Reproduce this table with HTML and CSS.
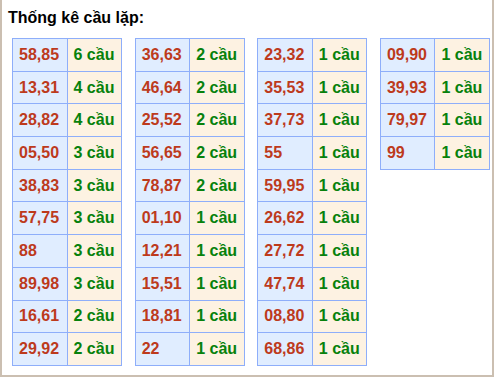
FILE: index.html
```html
<!DOCTYPE html>
<html lang="vi">
<head>
<meta charset="utf-8">
<link rel="stylesheet" href="styles.css">
</head>
<body>
<div class="box">
  <h3 class="title">Thống kê cầu lặp:</h3>
  <div class="grid">
    <table class="tk">
      <tr><td class="num">58,85</td><td class="cnt">6 cầu</td></tr>
      <tr><td class="num">13,31</td><td class="cnt">4 cầu</td></tr>
      <tr><td class="num">28,82</td><td class="cnt">4 cầu</td></tr>
      <tr><td class="num">05,50</td><td class="cnt">3 cầu</td></tr>
      <tr><td class="num">38,83</td><td class="cnt">3 cầu</td></tr>
      <tr><td class="num">57,75</td><td class="cnt">3 cầu</td></tr>
      <tr><td class="num">88</td><td class="cnt">3 cầu</td></tr>
      <tr><td class="num">89,98</td><td class="cnt">3 cầu</td></tr>
      <tr><td class="num">16,61</td><td class="cnt">2 cầu</td></tr>
      <tr><td class="num">29,92</td><td class="cnt">2 cầu</td></tr>
    </table>
    <table class="tk">
      <tr><td class="num">36,63</td><td class="cnt">2 cầu</td></tr>
      <tr><td class="num">46,64</td><td class="cnt">2 cầu</td></tr>
      <tr><td class="num">25,52</td><td class="cnt">2 cầu</td></tr>
      <tr><td class="num">56,65</td><td class="cnt">2 cầu</td></tr>
      <tr><td class="num">78,87</td><td class="cnt">2 cầu</td></tr>
      <tr><td class="num">01,10</td><td class="cnt">1 cầu</td></tr>
      <tr><td class="num">12,21</td><td class="cnt">1 cầu</td></tr>
      <tr><td class="num">15,51</td><td class="cnt">1 cầu</td></tr>
      <tr><td class="num">18,81</td><td class="cnt">1 cầu</td></tr>
      <tr><td class="num">22</td><td class="cnt">1 cầu</td></tr>
    </table>
    <table class="tk">
      <tr><td class="num">23,32</td><td class="cnt">1 cầu</td></tr>
      <tr><td class="num">35,53</td><td class="cnt">1 cầu</td></tr>
      <tr><td class="num">37,73</td><td class="cnt">1 cầu</td></tr>
      <tr><td class="num">55</td><td class="cnt">1 cầu</td></tr>
      <tr><td class="num">59,95</td><td class="cnt">1 cầu</td></tr>
      <tr><td class="num">26,62</td><td class="cnt">1 cầu</td></tr>
      <tr><td class="num">27,72</td><td class="cnt">1 cầu</td></tr>
      <tr><td class="num">47,74</td><td class="cnt">1 cầu</td></tr>
      <tr><td class="num">08,80</td><td class="cnt">1 cầu</td></tr>
      <tr><td class="num">68,86</td><td class="cnt">1 cầu</td></tr>
    </table>
    <table class="tk">
      <tr><td class="num">09,90</td><td class="cnt">1 cầu</td></tr>
      <tr><td class="num">39,93</td><td class="cnt">1 cầu</td></tr>
      <tr><td class="num">79,97</td><td class="cnt">1 cầu</td></tr>
      <tr><td class="num">99</td><td class="cnt">1 cầu</td></tr>
    </table>
  </div>
</div>
</body>
</html>
```

FILE: styles.css
```css
html, body {
  margin: 0;
  padding: 0;
  background: #fff;
}
body {
  font-family: "Liberation Sans", Arial, sans-serif;
}
.box {
  box-sizing: border-box;
  width: 494px;
  height: 377px;
  border: 2px solid #cbbfb1;
  border-top: none;
  padding: 8px 0 0 6px;
}
.title {
  margin: 0;
  font-size: 16px;
  font-weight: bold;
  line-height: 19px;
  color: #000;
}
.grid {
  display: flex;
  align-items: flex-start;
  gap: 12.67px;
  margin-top: 11px;
  padding-left: 4px;
}
.tk {
  border-collapse: collapse;
  width: 110px;
  table-layout: fixed;
  flex: none;
}
.tk tr {
  height: 32.7px;
}
.tk td {
  border: 1px solid #8eaefa;
  padding: 0 0 0 6px;
  font-size: 16px;
  font-weight: bold;
  line-height: 18px;
  vertical-align: middle;
  white-space: nowrap;
  overflow: hidden;
}
.num {
  background: #e0edff;
  color: #bd3a1c;
}
.cnt {
  background: #fdf2e2;
  color: #07810c;
}
```
